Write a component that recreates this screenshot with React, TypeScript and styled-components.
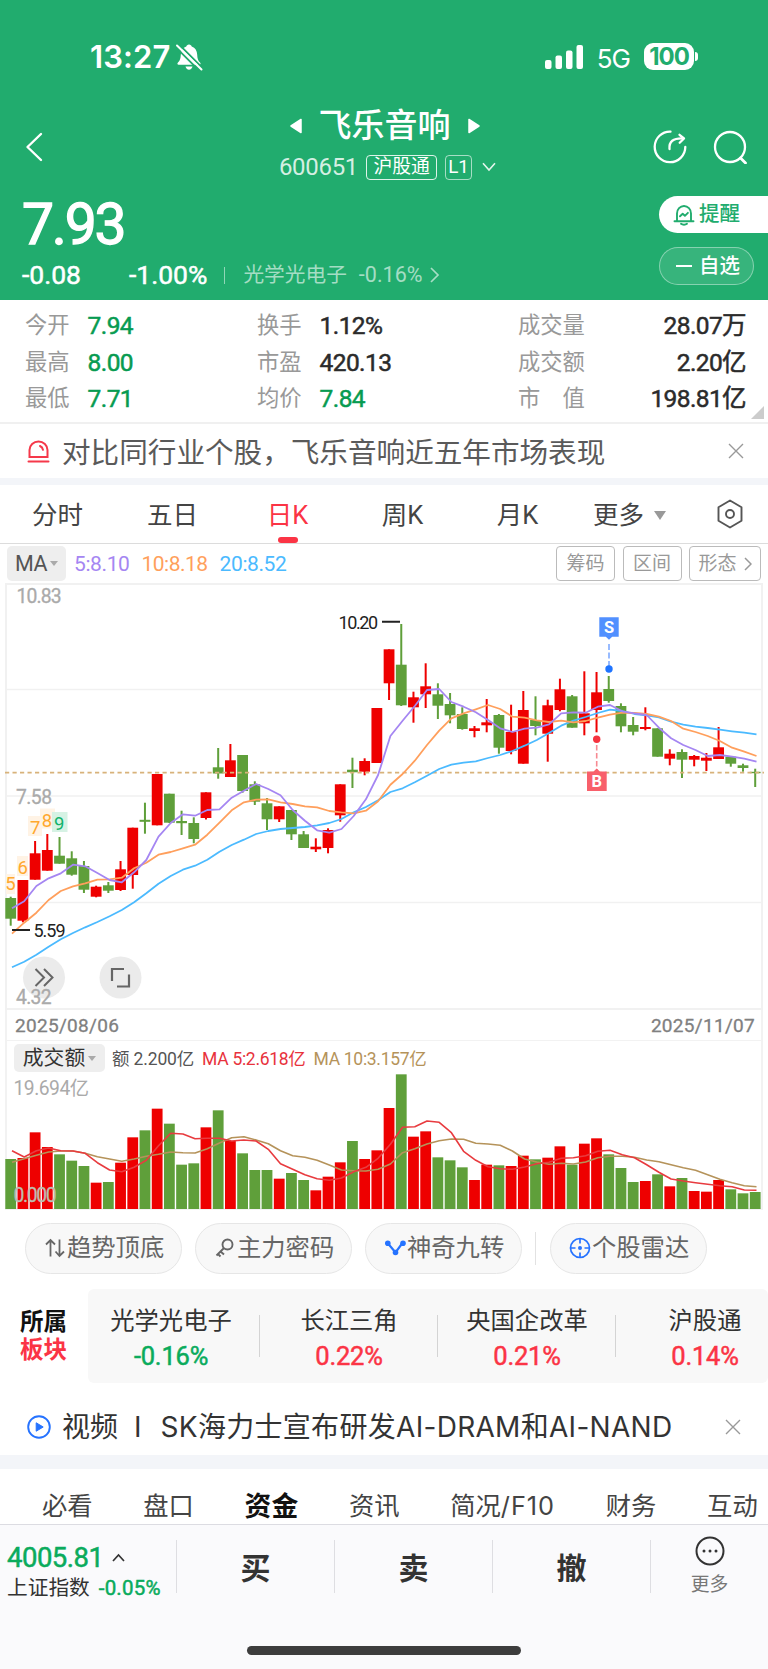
import React from "react";
import styled, { createGlobalStyle } from "styled-components";

const GREEN = "#21ac6e";
const UP = "#ee0000";
const DOWN = "#5f9f3a";
const SANS = `Roboto, "Noto Sans CJK SC", sans-serif`;
const SYSTEM = `Inter, "Noto Sans CJK SC", sans-serif`;

const GlobalStyle = createGlobalStyle`
  html, body { margin: 0; padding: 0; background: #fff; }
  *, *::before, *::after { box-sizing: border-box; }
  body { font-family: ${SANS}; }
  svg { display: block; flex: none; }
`;

const Page = styled.div`
  width: 768px;
  height: 1669px;
  overflow: hidden;
  display: flex;
  flex-direction: column;
  background: #fff;
  white-space: nowrap;
`;

/* Generic text run: size, weight, tracking and tone vary */
const Text = styled.span<{
  $size: number;
  $color?: string;
  $weight?: number;
  $track?: number;
  $ml?: number;
  $pt?: number;
  $font?: string;
}>`
  font-family: ${(p) => p.$font ?? SANS};
  font-size: ${(p) => p.$size}px;
  font-weight: ${(p) => p.$weight ?? 400};
  letter-spacing: ${(p) => p.$track ?? 0}px;
  color: ${(p) => p.$color ?? "inherit"};
  margin-left: ${(p) => p.$ml ?? 0}px;
  padding-top: ${(p) => p.$pt ?? 0}px;
  line-height: 1.2;
`;

/* Quote figures: slightly thickened regular weight */
const Figure = styled(Text)`
  -webkit-text-stroke: 0.5px currentColor;
`;

/* ---------- header ---------- */
const Header = styled.header`
  height: 300px;
  flex: none;
  background: ${GREEN};
  color: #fff;
  display: flex;
  flex-direction: column;
`;
const StatusBar = styled.div`
  height: 106px;
  padding: 7px 70px 0 90px;
  display: flex;
  align-items: center;
`;
const Spacer = styled.div`
  flex: 1;
`;
const Battery = styled.div`
  width: 50px;
  height: 27px;
  margin-left: 14px;
  border-radius: 9px;
  background: #fff;
  color: ${GREEN};
  font: 700 24px/27px ${SYSTEM};
  letter-spacing: -1px;
  text-align: center;
`;
const BatteryCap = styled.div`
  width: 3px;
  height: 9px;
  margin-left: 1px;
  border-radius: 0 3px 3px 0;
  background: #fff;
`;
const NavBar = styled.div`
  height: 82px;
  display: flex;
  align-items: center;
  padding: 0 21px 0 25px;
`;
const NavSide = styled.div<{ $end?: boolean }>`
  width: 150px;
  display: flex;
  align-items: center;
  justify-content: ${(p) => (p.$end ? "flex-end" : "flex-start")};
  gap: 26px;
  padding-bottom: 1px;
`;
const TitleBlock = styled.div`
  flex: 1;
  display: flex;
  flex-direction: column;
  align-items: center;
  padding: 0 3px 5px 0;
`;
const TitleRow = styled.div`
  height: 40px;
  display: flex;
  align-items: center;
  gap: 17px;
`;
const CodeRow = styled.div`
  height: 38px;
  display: flex;
  align-items: center;
  padding: 5px 0 0 6px;
`;
const Tag = styled.span<{ $w: number; $dim?: boolean }>`
  width: ${(p) => p.$w}px;
  height: 25px;
  margin-left: 8px;
  border: 1px solid rgba(255, 255, 255, ${(p) => (p.$dim ? 0.6 : 0.85)});
  border-radius: 4px;
  font: 400 18.8px/23px ${SANS};
  text-align: center;
`;
const QuoteArea = styled.div`
  flex: 1;
  display: flex;
  justify-content: space-between;
`;
const QuoteMain = styled.div`
  padding-left: 22px;
`;
const BigPrice = styled.div`
  height: 71px;
  font: 400 57px/74px ${SANS};
  letter-spacing: -2.2px;
  -webkit-text-stroke: 1.3px currentColor;
`;
const ChangeRow = styled.div`
  height: 32px;
  display: flex;
  align-items: center;
`;
const ThinRule = styled.i`
  width: 1px;
  height: 17px;
  margin: 0 18px 0 17px;
  background: rgba(255, 255, 255, 0.5);
`;
const QuoteActions = styled.div`
  display: flex;
  flex-direction: column;
  gap: 14px;
  padding-top: 8px;
`;
const RemindButton = styled.div`
  width: 109px;
  height: 37px;
  padding-left: 14px;
  border-radius: 19px 0 0 19px;
  background: #fff;
  color: ${GREEN};
  display: flex;
  align-items: center;
`;
const WatchButton = styled.div`
  width: 95px;
  height: 38px;
  padding-left: 16px;
  border-radius: 19px;
  border: 1.5px solid rgba(255, 255, 255, 0.4);
  background: rgba(255, 255, 255, 0.1);
  display: flex;
  align-items: center;
`;
const Dash = styled.i`
  width: 16px;
  height: 2px;
  background: #fff;
`;

/* ---------- statistics ---------- */
const Stats = styled.section`
  height: 124px;
  flex: none;
  display: grid;
  grid-template-columns: 232px 261px 1fr;
  grid-template-rows: repeat(3, 36.5px);
  padding: 7px 22px 0 25px;
  border-bottom: 2px solid #f0f0f0;
  position: relative;
`;
const Stat = styled.div`
  display: flex;
  align-items: center;
  font: 400 22.3px/36px ${SANS};
  color: #999;
`;
const StatValue = styled.span<{ $green?: boolean; $right?: boolean }>`
  margin-left: ${(p) => (p.$right ? "auto" : "18px")};
  padding-top: 2px;
  font-size: 24.5px;
  letter-spacing: -0.6px;
  -webkit-text-stroke: 0.5px currentColor;
  color: ${(p) => (p.$green ? "#079b51" : "#2b2b2b")};
`;
const Corner = styled.i`
  position: absolute;
  right: 4px;
  bottom: 3px;
  border-style: solid;
  border-width: 0 0 13px 13px;
  border-color: transparent transparent #ccc transparent;
`;

/* ---------- notices and bands ---------- */
const Notice = styled.section<{ $h: number; $pt?: number; $pr?: number }>`
  height: ${(p) => p.$h}px;
  flex: none;
  display: flex;
  align-items: center;
  padding: ${(p) => p.$pt ?? 0}px ${(p) => p.$pr ?? 24}px 0 27px;
`;
const Band = styled.div<{ $h: number }>`
  height: ${(p) => p.$h}px;
  flex: none;
  background: #f3f5f9;
`;

/* ---------- period tabs ---------- */
const PeriodTabs = styled.nav`
  height: 59px;
  flex: none;
  display: flex;
  border-bottom: 1px solid #dcdcdc;
`;
const Period = styled.div<{ $active?: boolean }>`
  width: 115px;
  position: relative;
  display: flex;
  align-items: center;
  justify-content: center;
  font: 400 25.5px/58px ${SANS};
  padding-top: 2px;
  color: ${(p) => (p.$active ? "#fb3445" : "#444")};
  &::after {
    content: "";
    display: ${(p) => (p.$active ? "block" : "none")};
    position: absolute;
    left: 48px;
    bottom: 0;
    width: 20px;
    height: 6px;
    border-radius: 3px;
    background: #fb3445;
  }
`;
const MorePeriod = styled(Period)`
  width: 141px;
  justify-content: flex-start;
  padding-left: 18px;
  gap: 10px;
`;
const Arrow = styled.i<{ $w: number; $h: number; $c: string }>`
  border-style: solid;
  border-width: ${(p) => p.$h}px ${(p) => p.$w / 2}px 0;
  border-color: ${(p) => p.$c} transparent transparent;
`;

/* ---------- indicator bar ---------- */
const IndicatorBar = styled.div`
  height: 39px;
  flex: none;
  display: flex;
  align-items: center;
  padding: 0 7px;
`;
const Picker = styled.div<{ $w: number; $h: number }>`
  width: ${(p) => p.$w}px;
  height: ${(p) => p.$h}px;
  border-radius: 5px;
  background: #eee;
  display: flex;
  align-items: center;
  justify-content: center;
  gap: 3px;
`;
const Outline = styled.div<{ $w: number }>`
  width: ${(p) => p.$w}px;
  height: 35px;
  margin-left: 7.5px;
  border: 1.5px solid #bbb;
  border-radius: 4px;
  display: flex;
  align-items: center;
  justify-content: center;
  gap: 7px;
  padding-top: 1px;
  font: 400 19px/32px ${SANS};
  color: #999;
`;

/* ---------- chart rows ---------- */
const FrameRow = styled.div<{ $h: number }>`
  height: ${(p) => p.$h}px;
  flex: none;
  margin: 0 5px;
  display: flex;
  align-items: center;
  border: solid #f2f2f2;
  border-width: 0 2px;
`;
const DateRow = styled(FrameRow)`
  justify-content: space-between;
  padding: 2px 6px 0 8px;
  border-bottom-width: 1px;
  font: 400 19px/30px ${SANS};
  letter-spacing: 0.3px;
  -webkit-text-stroke: 0.3px currentColor;
  color: #808080;
`;
const VolumeHeader = styled(FrameRow)`
  padding: 2px 0 0 7px;
`;

/* ---------- tool chips ---------- */
const Chips = styled.section`
  height: 79px;
  flex: none;
  display: flex;
  align-items: center;
  padding: 0 0 3px 25px;
`;
const Chip = styled.div`
  width: 157px;
  height: 51px;
  margin-right: 13px;
  border: 1px solid #e6e6e6;
  border-radius: 26px;
  background: #f8f8f8;
  display: flex;
  align-items: center;
  padding-left: 18px;
  gap: 1px;
  font: 400 24.3px/48px ${SANS};
  color: #666;
`;
const ChipRule = styled.i`
  width: 1px;
  height: 33px;
  margin-right: 14px;
  background: #e2e2e2;
`;

/* ---------- sectors ---------- */
const Sectors = styled.section`
  height: 94px;
  flex: none;
  display: flex;
`;
const SectorLabel = styled.div`
  width: 88px;
  padding: 19px 0 0 20px;
  font: 700 23.5px/28px ${SANS};
  color: #111;
`;
const RedLine = styled.div`
  color: #fb3445;
`;
const SectorPanel = styled.div`
  flex: 1;
  overflow: hidden;
  border-radius: 6px;
  background: #f8f8f8;
  display: flex;
`;
const Sector = styled.div<{ $first?: boolean }>`
  width: 178px;
  flex: none;
  margin-left: ${(p) => (p.$first ? -6 : 0)}px;
  position: relative;
  text-align: center;
  padding-top: 14px;
  &:not(:last-child)::after {
    content: "";
    position: absolute;
    right: 0;
    top: 26px;
    width: 1px;
    height: 42px;
    background: #d4d4d4;
  }
`;
const SectorName = styled.div`
  font: 400 24.3px/36px ${SANS};
  color: #333;
`;
const SectorValue = styled.div<{ $green?: boolean }>`
  font: 400 25.5px/35px ${SANS};
  letter-spacing: -0.2px;
  -webkit-text-stroke: 0.5px currentColor;
  color: ${(p) => (p.$green ? "#0aab5c" : "#fb3445")};
`;

/* ---------- bottom ---------- */
const InfoTabs = styled.nav`
  height: 55px;
  flex: none;
  display: flex;
  gap: 50.7px;
  padding: 9px 0 0 42px;
  font: 400 25.3px/56px ${SYSTEM};
  color: #444;
`;
const InfoTab = styled.span<{ $active?: boolean }>`
  font-weight: ${(p) => (p.$active ? 700 : 400)};
  color: ${(p) => (p.$active ? "#111" : "#444")};
  font-size: ${(p) => (p.$active ? 26.8 : 25.3)}px;
`;
const Spaced = styled.span`
  letter-spacing: 1px;
`;
const BottomBar = styled.footer`
  flex: 1;
  background: #fafafc;
  border-top: 1px solid #dcdce2;
  display: flex;
  flex-direction: column;
`;
const TradeRow = styled.div`
  height: 84px;
  display: flex;
`;
const IndexBox = styled.div`
  width: 176px;
  padding: 16px 0 0 7px;
  color: #0aab5c;
`;
const IndexLine = styled.div<{ $h: number }>`
  height: ${(p) => p.$h}px;
  display: flex;
  align-items: center;
`;
const TradeCell = styled.div`
  width: 158px;
  height: 53px;
  margin-top: 15px;
  border-left: 1px solid #dedee2;
  font: 600 30px/57px ${SANS};
  color: #333;
  text-align: center;
`;
const MoreCell = styled(TradeCell)`
  width: 118px;
  display: flex;
  flex-direction: column;
  align-items: center;
  gap: 3px;
  font: 400 18.8px/32px ${SANS};
  color: #777;
`;
const HomeBar = styled.div`
  width: 274px;
  height: 9px;
  margin: 37px auto 0;
  border-radius: 5px;
  background: #3d3d3d;
`;

/* ---------- chart data: [open/close top, bottom, high, low, rising] in plot pixels ---------- */
type Candle = [number, number, number, number, 0 | 1];
const CANDLES: Candle[] = [
  [898, 918.7, 896.7, 925.7, 0], [880, 920.7, 880, 922.3, 1], [853.3, 879.7, 841, 879.7, 1],
  [850, 870.7, 834, 870.7, 1], [855.7, 863.7, 837, 863.7, 0], [858.3, 874.7, 851.3, 875.7, 0],
  [866, 889.7, 861, 893, 0], [886.7, 896.7, 885.7, 897.3, 1], [885.3, 890.7, 882, 893, 0],
  [869.3, 890, 861, 891, 1], [827.7, 875, 827.7, 888.7, 1], [819.8, 821.8, 802.7, 833.7, 0],
  [774, 825.3, 774, 825.3, 1], [793.7, 822.7, 793.7, 823, 0], [821, 823.2, 810.7, 835, 0],
  [823, 839, 817.3, 843.3, 0], [792.3, 818, 792.3, 819.5, 1], [767.3, 773.5, 748, 778.7, 0],
  [760.3, 777, 744, 777, 1], [755, 791, 755, 792.7, 0], [784.3, 801.7, 781.3, 805, 0],
  [803.3, 819.3, 798, 830, 0], [806.3, 819.3, 806.3, 822, 1], [810, 834.3, 810, 840, 0],
  [834.3, 848, 831, 848, 0], [846.7, 849.3, 838.3, 852, 1], [830, 848, 828.3, 853.3, 1],
  [784.3, 815.3, 784.3, 821.7, 1], [769.7, 772.3, 757.7, 788, 0], [761, 771.7, 758.3, 775.3, 1],
  [708, 763, 708, 763, 1], [649.3, 683.3, 649.3, 700, 1], [664.7, 705.3, 624, 706, 0],
  [697.3, 707.3, 691.7, 722.7, 1], [686.3, 694.3, 663.3, 708, 1], [694.3, 705.7, 683.3, 719, 0],
  [704, 715.3, 693, 723.3, 0], [714, 729, 707.3, 729.7, 0], [728.3, 731, 726, 737.3, 1],
  [722.3, 725.3, 699, 732.3, 1], [715, 747.7, 714, 753.7, 0], [732, 751, 704.7, 754.3, 1],
  [710, 763.7, 691, 763.7, 1], [720, 726, 696.3, 735.3, 0], [705.3, 733.7, 699.7, 761.7, 1],
  [689.3, 710, 678.7, 711.3, 1], [696.3, 727.7, 695, 727.7, 0], [713.3, 723.3, 671.3, 735.3, 1],
  [692.3, 710, 672, 732.3, 1], [689, 701, 676, 702.7, 0], [706, 726.3, 703.3, 732.3, 0],
  [725, 731.7, 717, 735.3, 0], [727, 729, 707.3, 730.3, 1], [728.3, 756.7, 728.3, 756.7, 0],
  [753.7, 758.7, 749.3, 765.3, 1], [752, 759.7, 749.3, 778, 0], [756, 759.7, 755, 766.3, 1],
  [757.7, 760.7, 753, 771, 1], [747.3, 759, 727, 759, 1], [756.7, 763.7, 756.7, 766.7, 0],
  [765.3, 768, 763.7, 771.7, 0], [771.8, 773.2, 768.7, 787, 0],
];
const MA5 = [
  908.3, 901.3, 886, 878.3, 873.3, 864.7, 866.3, 873, 880, 882.3, 872.3, 860, 836.7, 823, 814.3,
  815.7, 810, 809.3, 797.7, 790.7, 784, 789, 795.3, 810, 820.7, 830.3, 832.7, 829, 816, 799.3,
  775, 736, 720.7, 706, 690, 689, 702, 706.7, 712.3, 720, 728.3, 732, 728.7, 727.7, 724.3, 713.3,
  712.3, 712.7, 706.7, 705, 711.3, 713.3, 715, 727.7, 738.3, 745, 750, 756, 755, 756.7, 758.7, 761.7,
];
const MA10 = [
  933.7, 922.7, 912.7, 900, 891, 886.3, 883.3, 879.7, 879.3, 877.7, 868.3, 862.7, 854.7, 852,
  848.3, 844.7, 834.7, 822.7, 810.3, 802.3, 799.7, 799.3, 802.3, 804, 806.3, 807.3, 811, 812.3,
  813.3, 810.7, 801.3, 784.7, 774, 760.7, 745, 730.7, 718.3, 713.3, 709.3, 705, 709, 716.7, 717.7,
  720.3, 722, 720.7, 722.3, 721, 717.7, 714.7, 712.7, 713, 714, 716.7, 721, 728.7, 732, 736, 741,
  747.7, 751.7, 756,
];
const MA20 = [
  967.3, 961.7, 954.7, 946.7, 939.3, 933, 927.3, 922, 916.3, 910, 902.3, 893.3, 883.7, 876, 869.7,
  865.7, 859.7, 851.7, 845, 839.7, 834, 831, 829, 828, 827, 825.3, 823, 819, 812.3, 807, 800.3,
  792, 788.3, 782.3, 775.7, 769, 764.7, 762.7, 761.3, 758, 755, 751, 745.7, 740, 733, 725.7,
  720.7, 717, 713, 709.7, 711, 714, 715.3, 717.3, 721.7, 724.7, 726.7, 728, 729.7, 731.3, 732.7, 734.3,
];
/* Volume tops, three units per pixel */
const VOL = [
  387, 384, 307, 351, 373, 392, 408, 458, 456, 398, 322, 301, 236, 281, 404, 400, 292, 241, 333,
  370, 420, 420, 446, 429, 450, 481, 440, 397, 333, 387, 361, 234, 133, 320, 304, 382, 391, 412,
  450, 404, 406, 408, 377, 388, 383, 349, 404, 341, 325, 373, 414, 456, 453, 433, 469, 444, 483,
  485, 450, 478, 490, 486,
];
const VMA5 = [
  362, 381, 362, 354, 362, 363, 370, 398, 420, 425, 412, 391, 347, 310, 312, 326, 325, 325, 333,
  330, 333, 358, 401, 418, 434, 446, 451, 444, 425, 412, 385, 343, 292, 290, 273, 277, 308, 364,
  391, 410, 416, 418, 411, 401, 397, 385, 383, 377, 364, 361, 374, 383, 404, 427, 447, 453, 458,
  463, 467, 470, 480, 481,
];
const VMA10 = [
  397, 386, 376, 366, 363, 363, 370, 380, 387, 394, 387, 379, 373, 366, 368, 369, 356, 339, 323,
  320, 330, 341, 362, 377, 382, 391, 405, 420, 422, 423, 418, 402, 368, 356, 342, 332, 327, 328,
  340, 342, 346, 363, 387, 396, 403, 400, 402, 396, 383, 379, 379, 382, 390, 395, 404, 413, 421,
  434, 448, 458, 467, 470,
];
const STEP = 12.205;
const cx = (i: number) => 10.7 + i * STEP;
const line = (ys: number[]) =>
  ys.map((y, i) => `${(cx(i) + 1.3).toFixed(1)},${y.toFixed(1)}`).join(" ");

const TURNS = [
  { n: "5", x: 6, y: 874, w: 9, tx: 10.5, ty: 890 },
  { n: "6", x: 17, y: 856, w: 11, tx: 22.7, ty: 873.7 },
  { n: "7", x: 28, y: 816, w: 14, tx: 35.2, ty: 834 },
  { n: "8", x: 40, y: 808.5, w: 15, tx: 47, ty: 826.8 },
];

const PriceChart = () => (
  <svg width="768" height="427" viewBox="0 583 768 427" fontFamily={SANS}>
    <g stroke="#f1f1f1" strokeWidth="1.4" fill="none">
      <path d="M6 689.5H762M6 796H762M6 902.5H762" />
      <path d="M6 584H762V1009H6Z" strokeWidth="2" />
    </g>
    {TURNS.map((t) => (
      <rect key={t.n} x={t.x} y={t.y} width={t.w} height="20" fill="#fff3e5" />
    ))}
    <rect x="52" y="812" width="15.5" height="20" fill="#d6f2e4" />
    <g fontSize="18.5" textAnchor="middle" fill="#ffa82e">
      {TURNS.map((t) => (
        <text key={t.n} x={t.tx} y={t.ty}>{t.n}</text>
      ))}
      <text x="59.3" y="829.5" fill="#12b26c">9</text>
    </g>
    <g fontSize="19.3" fill="#aaa" stroke="#aaa" strokeWidth="0.3">
      <text x="16.5" y="603" textLength="45">10.83</text>
      <text x="16" y="803.8" textLength="36">7.58</text>
    </g>
    {CANDLES.map(([t, b, h, l, up], i) => (
      <g key={i} fill={up ? UP : DOWN}>
        <rect x={cx(i) - 1} y={h} width="2" height={l - h} />
        <rect x={cx(i) - 5.4} y={t} width="10.8" height={b - t} />
      </g>
    ))}
    <path d="M5 772.6H764" stroke="#d8b27a" strokeWidth="1.6" strokeDasharray="4.2 3.3" />
    <g fill="none" strokeWidth="1.8" strokeLinejoin="round">
      <polyline points={line(MA20)} stroke="#4bbaff" />
      <polyline points={line(MA10)} stroke="#ff9f5c" />
      <polyline points={line(MA5)} stroke="#a586f2" />
    </g>
    <path d="M382 621.7h18M12 930h18" stroke="#222" strokeWidth="2" />
    <g fontSize="18" fill="#222">
      <text x="338.5" y="628.8" textLength="39.5">10.20</text>
      <text x="33.5" y="936.7" textLength="32">5.59</text>
    </g>
    {/* sell and buy flags */}
    <path d="M599.3 617.3h19.4v19.4h-6.5l-3.2 3-3.2-3h-6.5z" fill="#5190ff" />
    <path d="M609 644v22" stroke="#7fabff" strokeWidth="1.6" strokeDasharray="6 2.5" />
    <circle cx="609" cy="669" r="3.7" fill="#1f74ff" />
    <circle cx="596.7" cy="739.3" r="3.7" fill="#f5333f" />
    <path d="M596.7 745v25" stroke="#f78a92" strokeWidth="1.6" strokeDasharray="5.5 2.5" />
    <path d="M587 771.5h6.5l3.2-3 3.2 3h6.8v19.4H587z" fill="#f8606b" />
    <g fontSize="16.5" fontWeight="700" fill="#fff" textAnchor="middle">
      <text x="609" y="632.8">S</text>
      <text x="596.8" y="787">B</text>
    </g>
    <circle cx="44" cy="977.5" r="21" fill="#ebebeb" />
    <circle cx="120.5" cy="977.5" r="21" fill="#ebebeb" />
    <path d="M35.5 969l8.5 8.5-8.5 8.5M44 969l8.5 8.5L44 986" fill="none" stroke="#666" strokeWidth="2" />
    <path d="M112 981v-12h12M129 974.5v12h-12" fill="none" stroke="#666" strokeWidth="2.2" />
    <text x="16" y="1004" fontSize="19.3" fill="#aaa" stroke="#aaa" strokeWidth="0.3" textLength="35.5">4.32</text>
  </svg>
);

const VolumeChart = () => (
  <svg width="768" height="137" viewBox="0 1073 768 137" fontFamily={SANS}>
    <path d="M6 1073V1209H762V1073" fill="none" stroke="#f2f2f2" strokeWidth="2" />
    {VOL.map((v, i) => (
      <rect
        key={i}
        x={cx(i) - 5.4}
        y={1030 + v / 3}
        width="10.8"
        height={179 - v / 3}
        fill={CANDLES[i][4] ? UP : DOWN}
      />
    ))}
    <g fill="none" strokeWidth="1.6" strokeLinejoin="round">
      <polyline points={line(VMA10.map((v) => 1030 + v / 3))} stroke="#b5935a" />
      <polyline points={line(VMA5.map((v) => 1030 + v / 3))} stroke="#e83b3f" />
    </g>
    <g fontSize="19.3" fill="#aaa">
      <text x="13.5" y="1095" textLength="75.5">19.694亿</text>
      <text x="13.5" y="1202" fill="#bdbdb0" stroke="#bdbdb0" strokeWidth="0.3" textLength="43">0.000</text>
    </g>
  </svg>
);

const CloseIcon = () => (
  <svg width="16" height="16" viewBox="0 0 16 16">
    <path d="M1 1l14 14M15 1L1 15" stroke="#999" strokeWidth="1.4" />
  </svg>
);

export default function App() {
  return (
    <Page>
      <GlobalStyle />
      <Header>
        <StatusBar>
          <Text $size={31} $weight={600} $font={SYSTEM} $track={0.1} $pt={1}>13:27</Text>
          <svg width="28" height="28" viewBox="0 0 28 28" style={{ marginLeft: 5 }}>
            <path d="M14 1.5c1.5 0 2.5 1 2.7 2.1 3.6 1.1 5.3 4.2 5.5 8.2.2 4.6 1.3 6.3 3 8 .8.9.4 2-.8 2H3.6c-1.2 0-1.6-1.1-.8-2 1.7-1.7 2.8-3.4 3-8 .2-4 1.9-7.1 5.5-8.2C11.5 2.5 12.5 1.5 14 1.5z" fill="#fff" />
            <path d="M10.5 23.5h7c-.5 2-1.7 3.2-3.5 3.2s-3-1.2-3.5-3.2z" fill="#fff" />
            <path d="M3.5 1L27 24.5" stroke={GREEN} strokeWidth="1.8" />
            <path d="M.5 4L24 27.5" stroke={GREEN} strokeWidth="1.8" />
            <path d="M2 2.5l24.5 24" stroke="#fff" strokeWidth="2" strokeLinecap="round" />
          </svg>
          <Spacer />
          <svg width="39" height="24" viewBox="0 0 39 24">
            <g fill="#fff">
              <rect x="0" y="15" width="6.5" height="9" rx="2" />
              <rect x="10.5" y="10.5" width="6.5" height="13.5" rx="2" />
              <rect x="21" y="5.5" width="6.5" height="18.5" rx="2" />
              <rect x="31.5" y="0" width="6.5" height="24" rx="2" />
            </g>
          </svg>
          <Text $size={26} $font={SYSTEM} $ml={13} $track={-1} $pt={4}>5G</Text>
          <Battery>100</Battery>
          <BatteryCap />
        </StatusBar>

        <NavBar>
          <NavSide>
            <svg width="18" height="30" viewBox="0 0 18 30">
              <path d="M16 2L2.5 15 16 28" fill="none" stroke="#fff" strokeWidth="2.4" strokeLinecap="round" strokeLinejoin="round" />
            </svg>
          </NavSide>
          <TitleBlock>
            <TitleRow>
              <svg width="12" height="16" viewBox="0 0 12 16">
                <path d="M11 1.5v13L1 8z" fill="#fff" stroke="#fff" strokeWidth="1.5" strokeLinejoin="round" />
              </svg>
              <Text $size={33} $weight={500}>飞乐音响</Text>
              <svg width="12" height="16" viewBox="0 0 12 16">
                <path d="M1 1.5v13L11 8z" fill="#fff" stroke="#fff" strokeWidth="1.5" strokeLinejoin="round" />
              </svg>
            </TitleRow>
            <CodeRow>
              <Text $size={24} $color="rgba(255,255,255,.82)" $track={-0.3}>600651</Text>
              <Tag $w={71}>沪股通</Tag>
              <Tag $w={27} $dim>L1</Tag>
              <svg width="14" height="10" viewBox="0 0 14 10" style={{ marginLeft: 10 }}>
                <path d="M1 1.2l6 6.8 6-6.8" fill="none" stroke="#e3f5ec" strokeWidth="1.6" />
              </svg>
            </CodeRow>
          </TitleBlock>
          <NavSide $end>
            <svg width="34" height="34" viewBox="0 0 34 34" fill="none" stroke="#fff" strokeWidth="2.3" strokeLinecap="round" strokeLinejoin="round">
              <path d="M17.5 1.600A15.300 15.300 0 1 0 32.300 17" />
              <path d="M16.5 19c-.6-7.500 3.500-11 13.500-10.600" />
              <path d="M26.5 4.800L31 8.500l-4.300 4.200" />
            </svg>
            <svg width="34" height="34" viewBox="0 0 34 34" fill="none" stroke="#fff" strokeWidth="2.3" strokeLinecap="round">
              <circle cx="17" cy="17" r="15" />
              <path d="M27.5 28l5 5" strokeWidth="2.8" />
            </svg>
          </NavSide>
        </NavBar>

        <QuoteArea>
          <QuoteMain>
            <BigPrice>7.93</BigPrice>
            <ChangeRow>
              <Figure $size={26.5} $track={0}>-0.08</Figure>
              <Figure $size={26.5} $ml={48} $track={0}>-1.00%</Figure>
              <ThinRule />
              <Text $size={20.7} $color="rgba(255,255,255,.6)">光学光电子</Text>
              <Text $size={21.5} $color="rgba(255,255,255,.6)" $ml={12}>-0.16%</Text>
              <svg width="10" height="18" viewBox="0 0 10 18" style={{ marginLeft: 8 }}>
                <path d="M1 2l7 7-7 7" fill="none" stroke="#a6dec5" strokeWidth="1.7" />
              </svg>
            </ChangeRow>
          </QuoteMain>
          <QuoteActions>
            <RemindButton>
              <svg width="22" height="22" viewBox="0 0 22 22" fill="none" stroke={GREEN} strokeWidth="1.9" strokeLinecap="round" strokeLinejoin="round">
                <path d="M4 17V9.500a7 7.500 0 0 1 14 0V17M1.500 17.200h19M8 19.800c1.500 1.200 4.500 1.200 6 0M7 12.300l2.700-2.500 2.200 2 3-3" />
              </svg>
              <Text $size={20.5} $weight={500} $ml={4}>提醒</Text>
            </RemindButton>
            <WatchButton>
              <Dash />
              <Text $size={20.5} $weight={500} $ml={7}>自选</Text>
            </WatchButton>
          </QuoteActions>
        </QuoteArea>
      </Header>

      <Stats>
        <Stat>今开<StatValue $green>7.94</StatValue></Stat>
        <Stat>换手<StatValue>1.12%</StatValue></Stat>
        <Stat>成交量<StatValue $right>28.07万</StatValue></Stat>
        <Stat>最高<StatValue $green>8.00</StatValue></Stat>
        <Stat>市盈<StatValue>420.13</StatValue></Stat>
        <Stat>成交额<StatValue $right>2.20亿</StatValue></Stat>
        <Stat>最低<StatValue $green>7.71</StatValue></Stat>
        <Stat>均价<StatValue $green>7.84</StatValue></Stat>
        <Stat>市　值<StatValue $right>198.81亿</StatValue></Stat>
        <Corner />
      </Stats>

      <Notice $h={54}>
        <svg width="23" height="23" viewBox="0 0 23 23" fill="none" stroke="#f5384a" strokeWidth="2" strokeLinecap="round">
          <path d="M2.5 17V10a9 8.500 0 0 1 18 0v7zM1.500 21.500h20M13 6c1.800.8 2.700 2 3 3.800" />
        </svg>
        <Text $size={28.6} $color="#5a5a5a" $ml={12} $pt={4}>对比同行业个股，飞乐音响近五年市场表现</Text>
        <Spacer />
        <CloseIcon />
      </Notice>
      <Band $h={7} />

      <PeriodTabs>
        <Period>分时</Period>
        <Period>五日</Period>
        <Period $active>日K</Period>
        <Period>周K</Period>
        <Period>月K</Period>
        <MorePeriod>更多<Arrow $w={13} $h={9} $c="#999" /></MorePeriod>
        <svg width="28" height="30" viewBox="0 0 28 30" style={{ marginTop: 14 }} fill="none" stroke="#555" strokeWidth="1.9" strokeLinejoin="round">
          <path d="M14 1.500l11.500 6.700v13.600L14 28.500 2.500 21.800V8.200z" />
          <circle cx="14" cy="15" r="4" />
        </svg>
      </PeriodTabs>

      <IndicatorBar>
        <Picker $w={59} $h={35}>
          <Text $size={21.5} $color="#555" $track={-0.5} $pt={1}>MA</Text>
          <Arrow $w={9} $h={5} $c="#aaa" />
        </Picker>
        <Text $size={21} $color="#a586f2" $ml={8} $track={-0.4} $pt={2}>5:8.10</Text>
        <Text $size={21} $color="#ff9f5c" $ml={12} $track={-0.5} $pt={2}>10:8.18</Text>
        <Text $size={21} $color="#4bbaff" $ml={12} $track={-0.4} $pt={2}>20:8.52</Text>
        <Spacer />
        <Outline $w={59}>筹码</Outline>
        <Outline $w={59}>区间</Outline>
        <Outline $w={72}>
          形态
          <svg width="8" height="14" viewBox="0 0 8 14">
            <path d="M1 1l6 6-6 6" fill="none" stroke="#999" strokeWidth="1.5" />
          </svg>
        </Outline>
      </IndicatorBar>

      <PriceChart />
      <DateRow $h={31}>
        <span>2025/08/06</span>
        <span>2025/11/07</span>
      </DateRow>
      <VolumeHeader $h={32}>
        <Picker $w={91} $h={28}>
          <Text $size={20.8} $color="#333">成交额</Text>
          <Arrow $w={9} $h={5} $c="#aaa" />
        </Picker>
        <Text $size={17.5} $color="#555" $ml={7} $pt={2} $track={-0.15}>额 2.200亿</Text>
        <Text $size={17.5} $color="#e8323c" $ml={8} $pt={2} $track={-0.3}>MA 5:2.618亿</Text>
        <Text $size={17.5} $color="#b5935a" $ml={8} $pt={2} $track={-0.3}>MA 10:3.157亿</Text>
      </VolumeHeader>
      <VolumeChart />

      <Chips>
        <Chip>
          <svg width="22" height="22" viewBox="0 0 22 22" fill="none" stroke="#666" strokeWidth="1.8">
            <path d="M6.500 19.500V3M2 7.500L6.500 3 11 7.500M15.500 2.500V19M11.500 14.500l4 4.500 4.500-4.500" />
          </svg>
          趋势顶底
        </Chip>
        <Chip>
          <svg width="22" height="22" viewBox="0 0 22 22" fill="none" stroke="#666" strokeWidth="1.9">
            <circle cx="13.5" cy="7.5" r="5" />
            <path d="M10 11L2.500 18.500M6.500 14.500l3.500 3M4 17l2.500 2.500" />
          </svg>
          主力密码
        </Chip>
        <Chip>
          <svg width="22" height="22" viewBox="0 0 22 22">
            <path d="M4 6.500l7.500 9L18.500 6" fill="none" stroke="#2673ff" strokeWidth="2.2" />
            <g fill="#2673ff">
              <circle cx="3.8" cy="6.3" r="2.8" />
              <circle cx="11.5" cy="15.5" r="2.8" />
              <circle cx="19" cy="6.3" r="2.8" />
            </g>
          </svg>
          神奇九转
        </Chip>
        <ChipRule />
        <Chip>
          <svg width="22" height="22" viewBox="0 0 22 22" fill="none" stroke="#2673ff" strokeWidth="1.7">
            <circle cx="11" cy="11" r="9.5" />
            <path d="M11 1.500v5M11 15.500v5M1.500 11h5M15.500 11h5" />
            <circle cx="11" cy="11" r="2" fill="#2673ff" stroke="none" />
          </svg>
          个股雷达
        </Chip>
      </Chips>

      <Sectors>
        <SectorLabel>
          所属
          <RedLine>板块</RedLine>
        </SectorLabel>
        <SectorPanel>
          <Sector $first>
            <SectorName>光学光电子</SectorName>
            <SectorValue $green>-0.16%</SectorValue>
          </Sector>
          <Sector>
            <SectorName>长江三角</SectorName>
            <SectorValue>0.22%</SectorValue>
          </Sector>
          <Sector>
            <SectorName>央国企改革</SectorName>
            <SectorValue>0.21%</SectorValue>
          </Sector>
          <Sector>
            <SectorName>沪股通</SectorName>
            <SectorValue>0.14%</SectorValue>
          </Sector>
        </SectorPanel>
      </Sectors>

      <Notice $h={72} $pt={15} $pr={27}>
        <svg width="24" height="24" viewBox="0 0 24 24">
          <circle cx="12" cy="12" r="10.8" fill="none" stroke="#2673ff" strokeWidth="1.9" />
          <path d="M9.200 7.800v8.400l7-4.200z" fill="#2673ff" stroke="#2673ff" strokeLinejoin="round" />
        </svg>
        <Text $size={28} $color="#333" $ml={11} $pt={3}>视频</Text>
        <Text $size={28} $color="#333" $ml={16} $pt={2} $font={SYSTEM}>I</Text>
        <Text $size={28} $color="#333" $ml={19} $pt={3} $font={SYSTEM} $track={0.3}>SK海力士宣布研发AI-DRAM和AI-NAND</Text>
        <Spacer />
        <CloseIcon />
      </Notice>
      <Band $h={14} />

      <InfoTabs>
        <InfoTab>必看</InfoTab>
        <InfoTab>盘口</InfoTab>
        <InfoTab $active>资金</InfoTab>
        <InfoTab>资讯</InfoTab>
        <InfoTab>简况<Spaced>/F10</Spaced></InfoTab>
        <InfoTab>财务</InfoTab>
        <InfoTab>互动</InfoTab>
      </InfoTabs>

      <BottomBar>
        <TradeRow>
          <IndexBox>
            <IndexLine $h={32}>
              <Figure $size={27.5} $track={-0.5}>4005.81</Figure>
              <svg width="13" height="9" viewBox="0 0 13 9" style={{ marginLeft: 9 }}>
                <path d="M1 8l5.500-6L12 8" fill="none" stroke="#333" strokeWidth="1.7" />
              </svg>
            </IndexLine>
            <IndexLine $h={31}>
              <Text $size={20.7} $color="#333">上证指数</Text>
              <Figure $size={20.5} $ml={9} $track={0.2}>-0.05%</Figure>
            </IndexLine>
          </IndexBox>
          <TradeCell>买</TradeCell>
          <TradeCell>卖</TradeCell>
          <TradeCell>撤</TradeCell>
          <MoreCell>
            <svg width="30" height="30" viewBox="0 0 30 30" style={{ marginTop: -4 }}>
              <circle cx="15" cy="15" r="13.5" fill="none" stroke="#333" strokeWidth="2" />
              <g fill="#333">
                <circle cx="9" cy="15" r="1.5" />
                <circle cx="15" cy="15" r="1.5" />
                <circle cx="21" cy="15" r="1.5" />
              </g>
            </svg>
            更多
          </MoreCell>
        </TradeRow>
        <HomeBar />
      </BottomBar>
    </Page>
  );
}
